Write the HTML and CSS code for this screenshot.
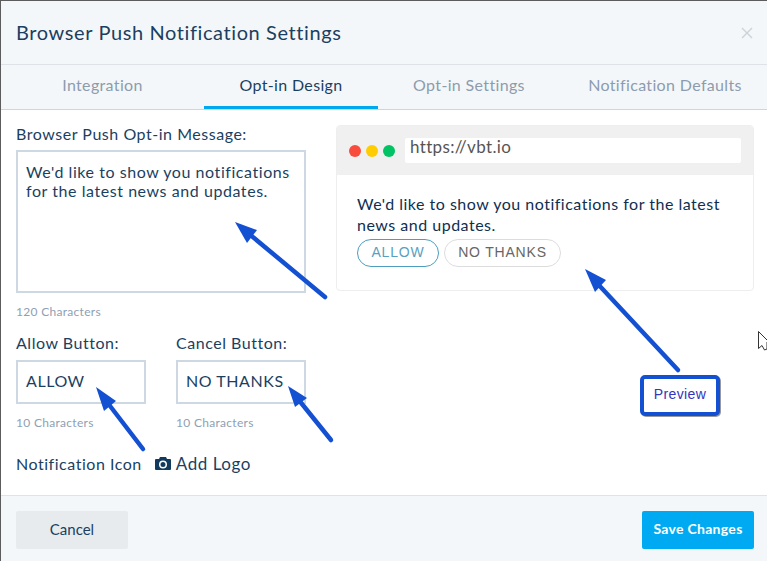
FILE: index.html
```html
<!DOCTYPE html>
<html lang="en">
<head>
    <meta charset="UTF-8">
    <title>Browser Push Notification Settings</title>
    <link rel="stylesheet" href="styles.css">
</head>
<body>
    <div class="modal">
        <div class="modal-header">
            <div class="modal-title">Browser Push Notification Settings</div>
            <svg class="modal-close" width="12" height="12" viewBox="0 0 12 12"><path d="M1 1l10 10M11 1L1 11" stroke="#cbd2d8" stroke-width="1.4" fill="none"/></svg>
        </div>
        <div class="tabs">
            <div class="tab tab-integration">Integration</div>
            <div class="tab tab-design active">Opt-in Design</div>
            <div class="tab tab-settings">Opt-in Settings</div>
            <div class="tab tab-defaults">Notification Defaults</div>
        </div>
        <div class="modal-body">
            <div class="form-col">
                <div class="field-label">Browser Push Opt-in Message:</div>
                <div class="input input-message">We'd like to show you notifications for the latest news and updates.</div>
                <div class="field-hint hint-message">120 Characters</div>
                <div class="button-fields">
                    <div class="button-field">
                        <div class="field-label">Allow Button:</div>
                        <div class="input input-short">ALLOW</div>
                        <div class="field-hint">10 Characters</div>
                    </div>
                    <div class="button-field">
                        <div class="field-label">Cancel Button:</div>
                        <div class="input input-short">NO THANKS</div>
                        <div class="field-hint">10 Characters</div>
                    </div>
                </div>
                <div class="icon-row">
                    <span>Notification Icon</span>
                    <span class="add-logo">
                        <svg width="16" height="14" viewBox="0 0 16 14"><path fill-rule="evenodd" fill="#123a5e" d="M1 2h3l1-2h6l1 2h3a1 1 0 0 1 1 1v9a1 1 0 0 1-1 1H1a1 1 0 0 1-1-1V3a1 1 0 0 1 1-1zM8 3.500a4 4 0 1 0 0 8 4 4 0 0 0 0-8zM8 5a2.500 2.500 0 1 1 0 5 2.500 2.500 0 0 1 0-5z"/></svg>
                        Add Logo
                    </span>
                </div>
            </div>
            <div class="preview">
                <div class="preview-bar">
                    <span class="dot dot-red"></span>
                    <span class="dot dot-yellow"></span>
                    <span class="dot dot-green"></span>
                    <div class="preview-url">https://vbt.io</div>
                </div>
                <div class="preview-body">
                    <div class="preview-text">We'd like to show you notifications for the latest news and updates.</div>
                    <div class="preview-buttons">
                        <span class="pill pill-allow">ALLOW</span>
                        <span class="pill pill-cancel">NO THANKS</span>
                    </div>
                </div>
            </div>
        </div>
        <div class="modal-footer">
            <div class="btn btn-cancel">Cancel</div>
            <div class="btn btn-save">Save Changes</div>
        </div>
    </div>

    <!-- annotations drawn over the screenshot -->
    <svg class="arrows" width="767" height="561" viewBox="0 0 767 561">
        <g stroke="#1450d2" stroke-width="4.500" stroke-linecap="round" fill="#1450d2">
            <path d="M325 297L248 233"/>
            <path d="M678 370L596 282"/>
            <path d="M143 449L107 402"/>
            <path d="M331 440L298 399"/>
        </g>
        <g fill="#1450d2">
            <path d="M235 222L257 230 247 243z"/>
            <path d="M585 269L606 280 595 292z"/>
            <path d="M96 387L116 401 104 411z"/>
            <path d="M288 386L307 398 295 407z"/>
        </g>
        <path class="cursor" d="M758.500 331.500V348.500L762 345.500 764.500 350 767 349V342L768 341z" fill="#fff" stroke="#333" stroke-width="1"/>
    </svg>
    <div class="callout">Preview</div>
</body>
</html>
```

FILE: styles.css
```css
html, body {
    margin: 0;
    padding: 0;
}
body {
    width: 767px;
    height: 561px;
    overflow: hidden;
    position: relative;
    background: #fff;
    color: #17395c;
    font-family: Lato, "Open Sans", sans-serif;
    font-size: 16px;
}
.modal {
    height: 560px;
    border-top: 1px solid #5c5c5c;
    border-left: 1px solid #5c5c5c;
    display: flex;
    flex-direction: column;
    background: #fff;
}
.modal-header {
    height: 64px;
    flex: none;
    box-sizing: border-box;
    display: flex;
    align-items: center;
    justify-content: space-between;
    padding: 0 14px 2px 15px;
    background: #f4f7f9;
    border-bottom: 1px solid #dfe3e7;
}
.modal-close {
    margin-top: 2px;
}
.modal-title {
    font-size: 20px;
    letter-spacing: 0.6px;
    color: #1b3f61;
}
.tabs {
    height: 44px;
    flex: none;
    display: grid;
    grid-template-columns: 203px 174px 182px 210px;
    background: #f4f7f9;
    border-bottom: 1px solid #cdd6df;
}
.tab {
    text-align: center;
    line-height: 39px;
    color: #8c9cae;
    letter-spacing: 0.35px;
    font-size: 16px;
}
.tab.active {
    color: #1b3f61;
    border-bottom: 3px solid #00a8f0;
    height: 41px;
}
.modal-body {
    flex: 1;
    display: flex;
    padding: 14px 13px 0 15px;
}
.form-col {
    width: 290px;
    flex: none;
}
.field-label {
    font-size: 16px;
    line-height: 20px;
    letter-spacing: 0.53px;
    color: #1b3f61;
}
.input {
    box-sizing: border-box;
    border: 2px solid #cdd8e2;
    padding: 0 8px;
    font-size: 16px;
    letter-spacing: 0.56px;
    color: #1b3f61;
}
.input-message {
    height: 143px;
    margin-top: 6px;
    padding-top: 10px;
    line-height: 19px;
}
.input-short {
    height: 44px;
    margin-top: 7px;
    line-height: 38px;
}
.field-hint {
    font-size: 12px;
    line-height: 16px;
    margin-top: 11px;
    letter-spacing: 0.3px;
    color: #8fa0b3;
}
.button-fields {
    display: grid;
    grid-template-columns: 130px 130px;
    column-gap: 30px;
    margin-top: 13px;
}
.icon-row {
    display: flex;
    align-items: center;
    gap: 13px;
    margin-top: 23px;
    line-height: 20px;
    letter-spacing: 0.53px;
    color: #1b3f61;
}
.add-logo {
    display: flex;
    align-items: center;
    gap: 5px;
    font-size: 17px;
}
.preview {
    margin-left: 30px;
    margin-top: 1px;
    width: 418px;
    height: 166px;
    box-sizing: border-box;
    border: 1px solid #eeeeee;
    border-radius: 4px;
    overflow: hidden;
}
.preview-bar {
    height: 49px;
    display: flex;
    align-items: center;
    padding: 0 12px;
    background: #f0f0f0;
}
.dot {
    width: 12px;
    height: 12px;
    border-radius: 50%;
    margin-right: 5px;
    flex: none;
}
.dot-red { background: #f94c3d; }
.dot-yellow { background: #ffcc00; }
.dot-green { background: #00c364; }
.preview-url {
    flex: 1;
    margin-left: 5px;
    height: 25px;
    line-height: 18px;
    padding-left: 5px;
    background: #fff;
    border-radius: 2px;
    color: #555;
    letter-spacing: 0.35px;
    font-size: 17px;
}
.preview-body {
    padding: 18px 20px 0;
}
.preview-text {
    font-size: 16px;
    line-height: 21px;
    letter-spacing: 0.5px;
    color: #0f2f50;
}
.preview-buttons {
    display: flex;
    gap: 5px;
    margin-top: 4px;
}
.pill {
    box-sizing: border-box;
    height: 28px;
    line-height: 25px;
    padding: 0 13px;
    border-radius: 14px;
    font-family: "Liberation Sans", Arial, sans-serif;
    font-size: 14px;
    letter-spacing: 0.8px;
    background: #fff;
}
.pill-allow {
    width: 82px;
    text-align: center;
    border: 1px solid #4c9dc0;
    color: #5a9fc0;
}
.pill-cancel {
    width: 117px;
    text-align: center;
    border: 1px solid #dcdcdc;
    color: #666;
}
.modal-footer {
    height: 66px;
    flex: none;
    box-sizing: border-box;
    display: flex;
    justify-content: space-between;
    padding: 15px 13px 0 15px;
    background: #f4f7f9;
    border-top: 1px solid #e0e3e5;
}
.btn {
    width: 112px;
    height: 38px;
    line-height: 36px;
    text-align: center;
    border-radius: 2px;
    font-size: 15px;
}
.btn-cancel {
    background: #e7ebee;
    color: #1b3f61;
}
.btn-save {
    background: #00aaf2;
    color: #fff;
    font-size: 14px;
    letter-spacing: 0.3px;
    font-weight: 700;
}
.arrows {
    position: absolute;
    left: 0;
    top: 0;
    pointer-events: none;
}
.callout {
    position: absolute;
    left: 640px;
    top: 375px;
    width: 80px;
    height: 41px;
    box-sizing: border-box;
    border: 4px solid #1450d2;
    border-radius: 5px;
    box-shadow: 1px 1px 0 #999;
    background: #fff;
    text-align: center;
    line-height: 31px;
    font-family: "Liberation Sans", Arial, sans-serif;
    font-size: 14px;
    letter-spacing: 0.4px;
    color: #3535bd;
}
```
